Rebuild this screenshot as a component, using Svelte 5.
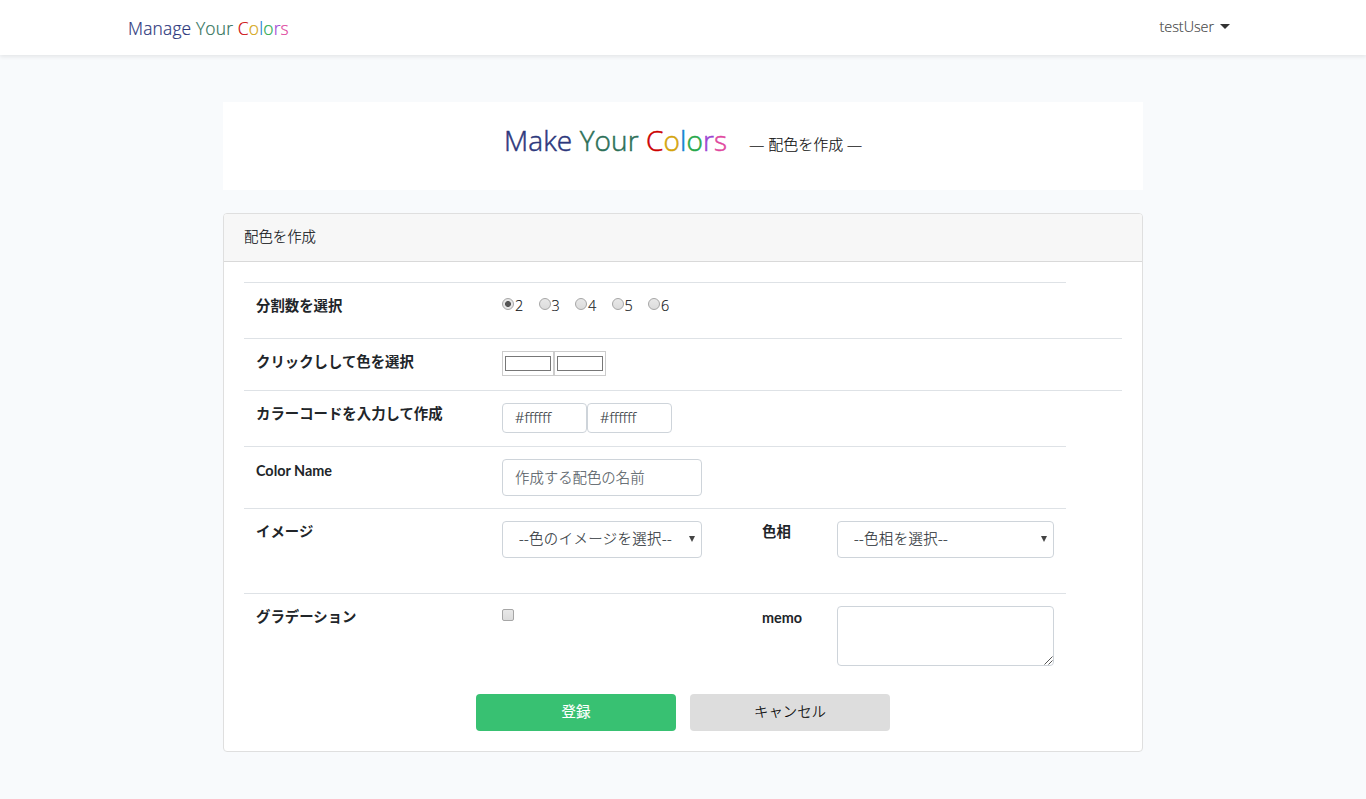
<script>
  const counts = [2, 3, 4, 5, 6];
  const letters = [
    ['C', '#cc0000'],
    ['o', '#d4a40c'],
    ['l', '#1482d2'],
    ['o', '#27a84a'],
    ['r', '#9b45d3'],
    ['s', '#e0479e']
  ];
  let count = $state(2);
  let codes = $state(['#ffffff', '#ffffff']);
</script>

{#snippet brand(first)}
  <span class="first">{first}</span> <span class="your">Your</span> <span>{#each letters as [l, c]}<span style="color:{c}">{l}</span>{/each}</span>
{/snippet}

<nav>
  <a class="brand" href="#top">{@render brand('Manage')}</a>
  <a class="user" href="#user"><span>testUser</span><i class="caret"></i></a>
</nav>

<main>
  <header class="hero">
    <h1>{@render brand('Make')}</h1>
    <span class="sub">― 配色を作成 ―</span>
  </header>

  <section class="card">
    <div class="card-head">配色を作成</div>
    <div class="card-body">
      <div class="row r1">
        <b>分割数を選択</b>
        <div class="radios">
          {#each counts as n}
            <label><input type="radio" name="count" value={n} bind:group={count} />{n}</label>
          {/each}
        </div>
      </div>
      <div class="row r2 wide">
        <b>クリックしして色を選択</b>
        <div class="swatches">
          {#each codes as c}
            <button class="swatch" aria-label="color"><span style="background:{c}"></span></button>
          {/each}
        </div>
      </div>
      <div class="row r3 wide">
        <b>カラーコードを入力して作成</b>
        <div class="codes">
          {#each codes as c, i}
            <input class="control code" bind:value={codes[i]} />
          {/each}
        </div>
      </div>
      <div class="row r4">
        <b class="latin">Color Name</b>
        <input class="control" placeholder="作成する配色の名前" />
      </div>
      <div class="row r5">
        <b>イメージ</b>
        <div class="select"><select class="control"><option>--色のイメージを選択--</option></select><i></i></div>
        <b class="second">色相</b>
        <div class="select"><select class="control"><option>--色相を選択--</option></select><i></i></div>
      </div>
      <div class="row r6">
        <b>グラデーション</b>
        <input class="check" type="checkbox" />
        <b class="second latin">memo</b>
        <div class="area">
          <textarea class="control"></textarea>
          <svg width="9" height="9" viewBox="0 0 9 9"><path d="M0.5 8.5L8.5 0.5M4.5 8.5L8.5 4.5" stroke="#555" stroke-width="1" fill="none" /></svg>
        </div>
      </div>
      <div class="actions">
        <button class="save">登録</button>
        <button class="cancel">キャンセル</button>
      </div>
    </div>
  </section>
</main>

<style>
  :global(body) {
    margin: 0;
    background: #f8fafc;
    color: #111417;
    font: 300 14.4px/23px 'Open Sans', 'Noto Sans CJK JP', sans-serif;
    -webkit-text-stroke: 0.15px currentColor;
  }
  :global(html) { overflow: hidden; }
  * { box-sizing: border-box; }
  a { text-decoration: none; color: inherit; }
  nav {
    height: 55px;
    padding: 0 136px 0 128px;
    display: flex;
    align-items: center;
    justify-content: space-between;
    background: #fff;
    box-shadow: 0 2px 4px rgba(0, 0, 0, 0.08);
  }
  .first, .your, .first ~ span span { -webkit-text-stroke-color: currentColor; }
  .first { color: #2c377c; }
  .your { color: #2d7058; }
  .brand { font-size: 17.4px; letter-spacing: 0.17px; white-space: nowrap; -webkit-text-stroke-width: 0.2px; padding-top: 1px; }
  .user { display: flex; align-items: center; gap: 6px; color: #444; padding-bottom: 2px; letter-spacing: -0.05px; }
  .caret { border: 5px solid transparent; border-top-color: #333; border-bottom: 0; }
  main { width: 920px; margin: 47px auto 0; }
  .hero {
    height: 88px;
    background: #fff;
    display: flex;
    justify-content: center;
    align-items: baseline;
    gap: 22px;
    padding-top: 21px;
  }
  h1 { margin: 0; font-size: 28px; line-height: 35px; font-weight: 300; letter-spacing: 0.1px; white-space: nowrap; -webkit-text-stroke-width: 0.5px; }
  .sub { color: #111; font-size: 15px; white-space: nowrap; position: relative; top: -1px; }
  .card {
    margin-top: 23px;
    height: 539px;
    background: #fff;
    border: 1px solid #dfdfdf;
    border-radius: 4px;
    overflow: hidden;
  }
  .card-head { height: 48px; padding: 11px 20px; background: #f7f7f7; border-bottom: 1px solid #d9d9d9; }
  .card-body { padding: 20px; }
  .row {
    width: 822px;
    border-top: 1px solid #dee2e6;
    padding: 12px;
    display: grid;
    grid-template-columns: 246px 200px 60px 75px 217px;
    align-items: start;
  }
  .wide { width: 878px; }
  .r1, .r3 { height: 56px; }
  .r2 { height: 52px; }
  .r4 { height: 62px; }
  .r5 { height: 85px; }
  .r6 { height: 101px; }
  b { font-family: Lato, 'Noto Sans CJK JP', sans-serif; font-weight: 700; white-space: nowrap; margin-top: -1px; color: #212529; -webkit-text-stroke-width: 0; }
  .latin { margin-top: 0; }
  .second { grid-column: 4; }
  .radios { display: flex; }
  .radios label { display: flex; width: 36.5px; height: 22px; line-height: 22px; }
  input, select, textarea, button { margin: 0; font: inherit; }
  input[type='radio'], .check {
    appearance: none;
    width: 12px;
    height: 12px;
    flex: none;
    border: 1px solid #a6a6a6;
    background: linear-gradient(#e8e8e8, #dcdcdc);
  }
  input[type='radio'] { margin: 3px 1px 0 0; border-radius: 50%; }
  input[type='radio']:checked { background: radial-gradient(circle, #555 2.6px, #e6e6e6 3.3px); }
  .check { margin-top: 3px; border-radius: 2px; }
  .swatches, .codes { display: flex; }
  .swatch { width: 52px; height: 25px; padding: 4px 2px; background: #fff; border: 1px solid #ccc; }
  .swatch span { display: block; height: 15px; border: 1px solid #777; }
  .control {
    display: block;
    width: 100%;
    height: 37px;
    padding: 6px 12px;
    background: #fff;
    border: 1px solid #ced4da;
    border-radius: 4px;
    color: #30363b;
    outline: 0;
    appearance: none;
  }
  .control::placeholder { color: #565e66; opacity: 1; }
  .code { width: 85px; height: 30px; padding: 0 12px 2px; letter-spacing: 0.15px; }
  .select, .area { position: relative; }
  .select select { padding: 5px 0 7px 16px; letter-spacing: 0.4px; }
  .select i {
    position: absolute;
    right: 7px;
    top: 15px;
    border: 3.5px solid transparent;
    border-top: 6px solid #444;
    border-bottom: 0;
  }
  textarea.control { height: 60px; resize: none; }
  .area svg { position: absolute; right: 1px; bottom: 1px; }
  .actions { display: flex; justify-content: center; gap: 14px; }
  .actions button { width: 200px; height: 37px; padding: 0 0 2px; border: 0; border-radius: 4px; }
  .save { background: #38c172; color: #fff; font-weight: 400; }
  .cancel { background: #ddd; color: #000; }
</style>
